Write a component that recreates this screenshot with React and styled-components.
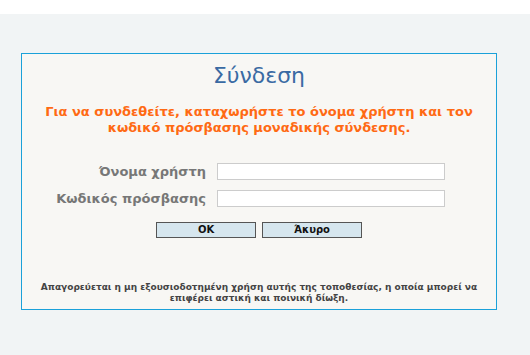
import React from 'react'
import styled, { createGlobalStyle } from 'styled-components'

const Global = createGlobalStyle`
  html, body {
    margin: 0;
    padding: 0;
    background: #f1f4f5;
    font-family: "DejaVu Sans", Verdana, sans-serif;
  }
`

const TopBar = styled.div`
  height: 14px;
  background: #ffffff;
`

const Page = styled.div`
  padding: 39px 0 0 21px;
`

const Panel = styled.div`
  box-sizing: border-box;
  width: 476px;
  height: 257px;
  border: 1px solid #1ba1d9;
  background: #f8f7f4;
  display: flex;
  flex-direction: column;
  align-items: center;
`

const Title = styled.h1`
  margin: 8px 0 0;
  font-size: 22px;
  font-weight: normal;
  line-height: 28px;
  color: #3a6aa3;
`

const Notice = styled.p`
  margin: 14px 0 0;
  width: 440px;
  text-align: center;
  font-size: 13px;
  font-weight: bold;
  line-height: 16px;
  color: #ff6a13;
`

const Form = styled.div`
  margin-top: 27px;
  display: grid;
  grid-template-columns: 150px 228px;
  column-gap: 11px;
  row-gap: 10px;
  align-items: center;
  margin-left: -17px;
`

const Label = styled.label`
  text-align: right;
  font-size: 13px;
  font-weight: bold;
  color: #777777;
`

const Field = styled.input`
  box-sizing: border-box;
  width: 228px;
  height: 17px;
  border: 1px solid #cccccc;
  background: #ffffff;
  margin: 0;
  padding: 0 2px;
`

const Buttons = styled.div`
  margin-top: 15px;
  display: flex;
  gap: 6px;
`

const Button = styled.button`
  box-sizing: border-box;
  width: 100px;
  height: 16px;
  padding: 0;
  border: 1px solid #555555;
  background: #d6e6ee;
  font-family: "DejaVu Sans", Verdana, sans-serif;
  font-size: 10px;
  font-weight: bold;
  color: #111111;
  line-height: 14px;
`

const Footer = styled.p`
  margin: auto 0 5px;
  width: 450px;
  text-align: center;
  font-size: 9px;
  font-weight: bold;
  line-height: 11px;
  color: #444444;
`

export default function App() {
  return (
    <>
      <Global />
      <TopBar />
      <Page>
        <Panel>
          <Title>Σύνδεση</Title>
          <Notice>
            Για να συνδεθείτε, καταχωρήστε το όνομα χρήστη και τον κωδικό πρόσβασης μοναδικής σύνδεσης.
          </Notice>
          <Form>
            <Label htmlFor="user">Όνομα χρήστη</Label>
            <Field id="user" type="text" />
            <Label htmlFor="pass">Κωδικός πρόσβασης</Label>
            <Field id="pass" type="password" />
          </Form>
          <Buttons>
            <Button>OK</Button>
            <Button>Άκυρο</Button>
          </Buttons>
          <Footer>
            Απαγορεύεται η μη εξουσιοδοτημένη χρήση αυτής της τοποθεσίας, η οποία μπορεί να επιφέρει αστική και ποινική δίωξη.
          </Footer>
        </Panel>
      </Page>
    </>
  )
}
